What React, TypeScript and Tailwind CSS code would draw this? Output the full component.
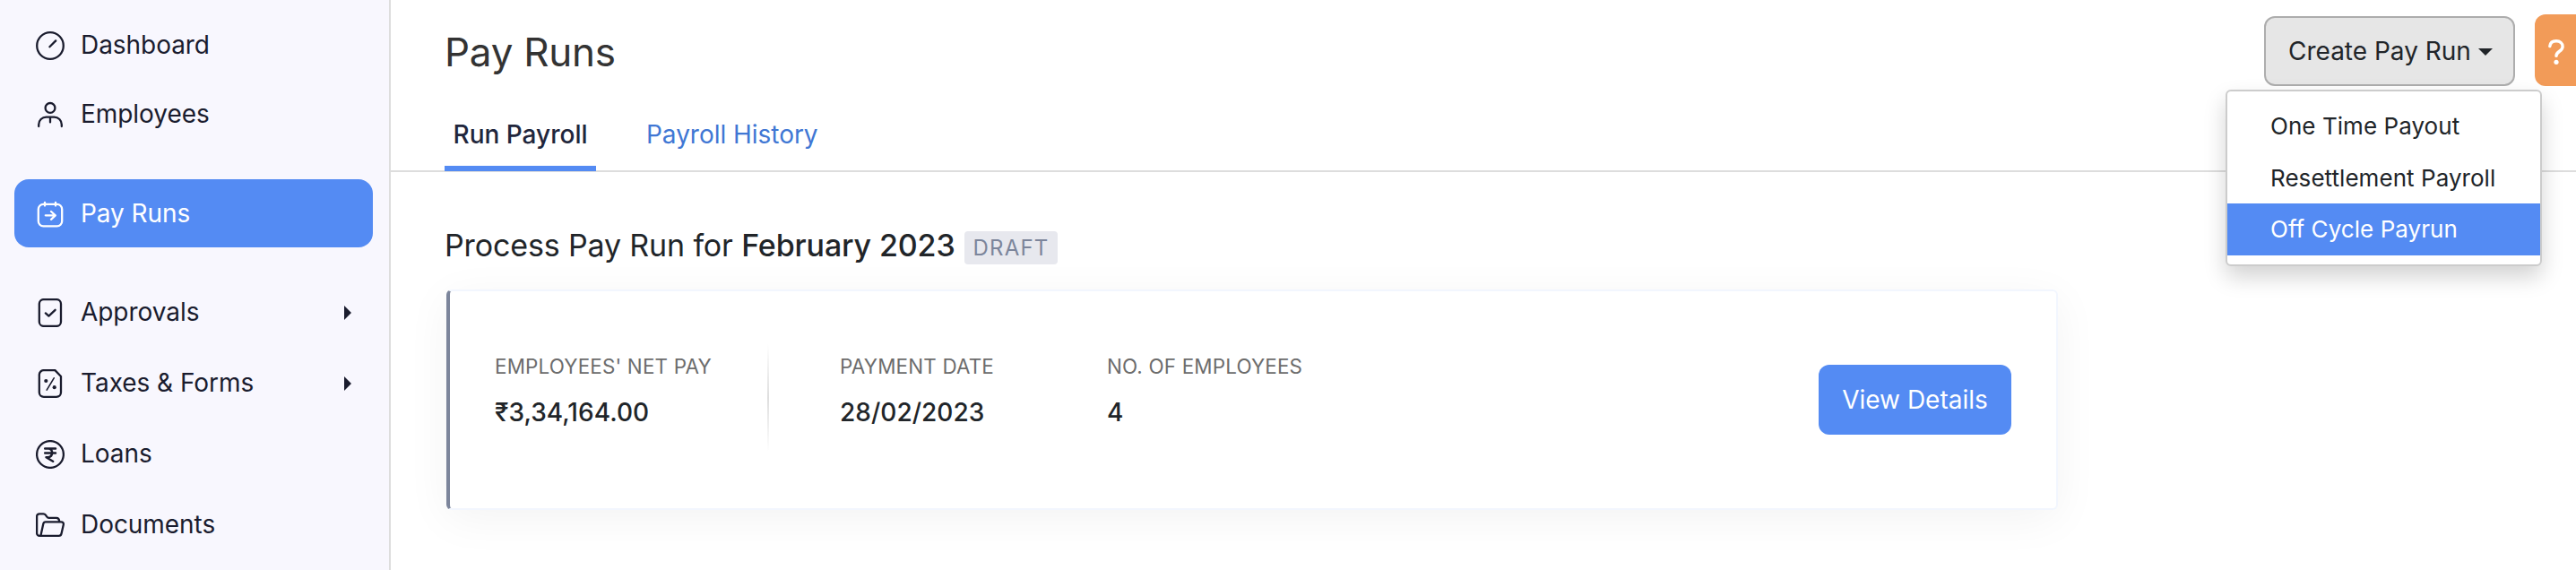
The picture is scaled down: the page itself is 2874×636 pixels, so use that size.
import type { ReactNode } from "react";
import clsx from "clsx";

interface NavItemProps {
  label: string;
  icon: ReactNode;
  active?: boolean;
  expandable?: boolean;
  className?: string;
}

function Icon({ children }: { children: ReactNode }) {
  return (
    <svg
      viewBox="0 0 32 32"
      className="w-8 h-8 mt-0.5 shrink-0"
      fill="none"
      stroke="currentColor"
      strokeWidth="2.3"
      strokeLinecap="round"
      strokeLinejoin="round"
    >
      {children}
    </svg>
  );
}

const icons = {
  dashboard: (
    <Icon>
      <circle cx="16" cy="16" r="14.8" />
      <path d="M15.4 17.2 22.2 10.4" />
    </Icon>
  ),
  employees: (
    <Icon>
      <circle cx="16" cy="8.4" r="5.4" />
      <path d="M3.2 29V27a8.4 8.4 0 0 1 8.4-8.4h8.8a8.4 8.4 0 0 1 8.4 8.4v2M16 18.8v5.6" />
    </Icon>
  ),
  payRuns: (
    <Icon>
      <rect x="2.8" y="4.8" width="26.4" height="24.6" rx="5.6" />
      <path d="M10 3v3.6M22 3v3.6M10.8 17.3h10.8M17 13l4.8 4.3-4.8 4.5" />
    </Icon>
  ),
  approvals: (
    <Icon>
      <rect x="3.8" y="1.1" width="24.2" height="29.8" rx="5" />
      <path d="m10.8 16.4 3.6 3.2 7.2-6.8" />
    </Icon>
  ),
  taxes: (
    <Icon>
      <path d="M21.4 1.1H8.8a5 5 0 0 0-5 5v19.7a5 5 0 0 0 5 5H23a5 5 0 0 0 5-5V8z" />
      <path d="M20.2 9.8 12.2 23.2" strokeWidth="1.6" />
      <circle cx="11.3" cy="13" r="2.1" fill="currentColor" stroke="none" />
      <circle cx="20.7" cy="20.2" r="2.1" fill="currentColor" stroke="none" />
    </Icon>
  ),
  loans: (
    <Icon>
      <circle cx="16" cy="16" r="14.9" />
      <path
        d="M10.2 9.6h11.8M10.2 14.6h11.8M14 9.6c5.6 0 5.8 9.4-1 9.6h-1.5l7.6 4.6"
        strokeWidth="2.5"
      />
    </Icon>
  ),
  documents: (
    <Icon>
      <path d="M5.4 27.8H4a2.9 2.9 0 0 1-2.9-2.9V6.2A2.9 2.9 0 0 1 4 3.3h4.4c1.2 0 1.8.4 2.5 1.4l1.2 1.7c.7 1 1.3 1.5 2.4 1.5h8.5c1.8 0 3 1.2 3.2 3.8" />
      <path d="m5.4 27.8 2.9-13.4a2.6 2.6 0 0 1 2.5-2h17.6c1.7 0 2.8 1.3 2.4 3l-2.3 10.1a2.9 2.9 0 0 1-2.8 2.3z" />
    </Icon>
  ),
};

function NavItem({ label, icon, active, expandable, className }: NavItemProps) {
  return (
    <a
      className={clsx(
        "flex items-center h-[76px] px-6 rounded-2xl text-[28px] leading-[42px]",
        active ? "bg-[#548bf3] text-white" : "text-[#1a1c2e]",
        className,
      )}
    >
      {icon}
      <span className="flex-1 ml-[18px] tracking-[-0.05px]">{label}</span>
      {expandable && (
        <svg viewBox="0 0 8 16" className="w-2 h-4 mt-0.5" fill="currentColor">
          <path d="M0 0 8 8 0 16z" />
        </svg>
      )}
    </a>
  );
}

function Sidebar() {
  return (
    <aside className="w-[436px] shrink-0 pt-3 px-4 bg-[#f8f7fe] border-r-2 border-[#dddddd]">
      <nav className="flex flex-col w-[400px]">
        <NavItem label="Dashboard" icon={icons.dashboard} />
        <NavItem label="Employees" icon={icons.employees} className="mt-px" />
        <NavItem label="Pay Runs" icon={icons.payRuns} active className="mt-[35px]" />
        <NavItem label="Approvals" icon={icons.approvals} expandable className="mt-[34px]" />
        <NavItem label="Taxes & Forms" icon={icons.taxes} expandable className="mt-[3px]" />
        <NavItem label="Loans" icon={icons.loans} className="mt-[3px]" />
        <NavItem label="Documents" icon={icons.documents} className="mt-[3px]" />
      </nav>
    </aside>
  );
}

const menuItems = ["One Time Payout", "Resettlement Payroll", "Off Cycle Payrun"];

function CreateMenu() {
  return (
    <div className="relative mt-[18px]">
      <button className="flex items-center w-[280px] h-[78px] pl-[25px] rounded-xl border-2 border-[#adadad] bg-[#e6e6e6] text-[28px] text-[#212529]">
        <span>Create Pay Run</span>
        <svg viewBox="0 0 16 8" className="w-4 h-2 ml-2 mt-0.5" fill="currentColor">
          <path d="M0 0h16L8 8z" />
        </svg>
      </button>
      <ul className="absolute z-10 top-[82px] right-[-30px] w-[353px] h-[197px] pt-[9px] bg-white rounded-md border-2 border-[#cccccc] shadow-[0_12px_24px_rgba(0,0,0,0.175)]">
        {menuItems.map((item) => (
          <li
            key={item}
            className={clsx(
              "flex items-center h-[58px] pl-12 text-[26px] tracking-[0.05px] whitespace-nowrap",
              item === "Off Cycle Payrun" ? "pb-px bg-[#548bf3] text-white" : "pt-px text-[#212529]",
            )}
          >
            {item}
          </li>
        ))}
      </ul>
    </div>
  );
}

function Header() {
  return (
    <header className="flex justify-between h-48 pl-[60px] border-b-2 border-[#dddddd]">
      <div className="flex flex-col justify-between">
        <h1 className="mt-[25px] text-[44px] leading-[66px] tracking-[-0.25px] text-[#333333]">
          Pay Runs
        </h1>
        <div className="flex -mb-px text-[28px] leading-[42px]">
          <a className="h-[62px] w-[169px] text-center font-medium text-[#21263c] border-b-6 border-[#548bf3]">
            Run Payroll
          </a>
          <a className="ml-14 text-[#4077d4] tracking-[-0.03px]">Payroll History</a>
        </div>
      </div>
      <div className="flex items-start">
        <CreateMenu />
        <button
          className="flex w-[46px] h-20 mt-4 ml-[22px] pt-7 pl-[15px] rounded-l-xl bg-[#f29b58] text-white"
          aria-label="Help"
        >
          <svg
            viewBox="0 0 18 28"
            className="w-[18px] h-7"
            fill="none"
            stroke="currentColor"
            strokeWidth="3.4"
            strokeLinecap="round"
            strokeLinejoin="round"
          >
            <path d="M1.8 7.6C2.2 4 5 1.8 9 1.8c4.2 0 7.1 2.4 7.1 6.1 0 5.6-7.1 5.1-7.1 10.5" />
            <circle cx="9" cy="25.3" r="2.6" fill="currentColor" stroke="none" />
          </svg>
        </button>
      </div>
    </header>
  );
}

function Stat({ label, value, className }: { label: string; value: string; className?: string }) {
  return (
    <div className={className}>
      <p className="text-[22.4px] leading-[34px] tracking-[0.18px] text-[#6c6c6c] whitespace-nowrap">
        {label}
      </p>
      <p className="mt-[13px] text-[28px] leading-[42px] tracking-[0.03px] font-medium text-[#212529]">
        {value}
      </p>
    </div>
  );
}

function PayRunCard() {
  return (
    <div className="flex w-[1798px] h-[246px] mt-[26px] ml-[2px] px-[50px] rounded-md border-2 border-[#f2f6fe] border-l-4 border-l-[#7c859b] bg-white shadow-[0_10px_50px_rgba(0,0,0,0.05)]">
      <Stat className="w-[304px] mt-[67px]" label="EMPLOYEES' NET PAY" value="₹3,34,164.00" />
      <div className="w-0.5 h-[120px] mt-[59px] bg-linear-to-b from-transparent via-[#dedede] to-transparent" />
      <Stat className="w-[298px] ml-[79px] mt-[67px]" label="PAYMENT DATE" value="28/02/2023" />
      <Stat className="flex-1 mt-[67px]" label="NO. OF EMPLOYEES" value="4" />
      <button className="w-[215px] h-[78px] mt-[82px] rounded-xl bg-[#548bf3] text-[28px] text-white">
        View Details
      </button>
    </div>
  );
}

export default function App() {
  return (
    <div className="flex w-[2874px] h-[636px] overflow-hidden bg-white font-['Inter',sans-serif] [font-optical-sizing:none]">
      <Sidebar />
      <main className="flex-1 min-w-0">
        <Header />
        <section className="pl-[60px] pt-[59px]">
          <div className="flex items-center h-[46px] text-[34px] leading-[46px] text-[#212529]">
            <h2 className="tracking-[-0.14px]">
              Process Pay Run for <span className="font-medium">February 2023</span>
            </h2>
            <span className="h-[37px] mt-[5px] ml-[10px] pl-[10px] pr-[9px] rounded bg-[#e7e8ee] text-2xl leading-[37px] tracking-[1.2px] text-[#7c859b]">
              DRAFT
            </span>
          </div>
          <PayRunCard />
        </section>
      </main>
    </div>
  );
}
